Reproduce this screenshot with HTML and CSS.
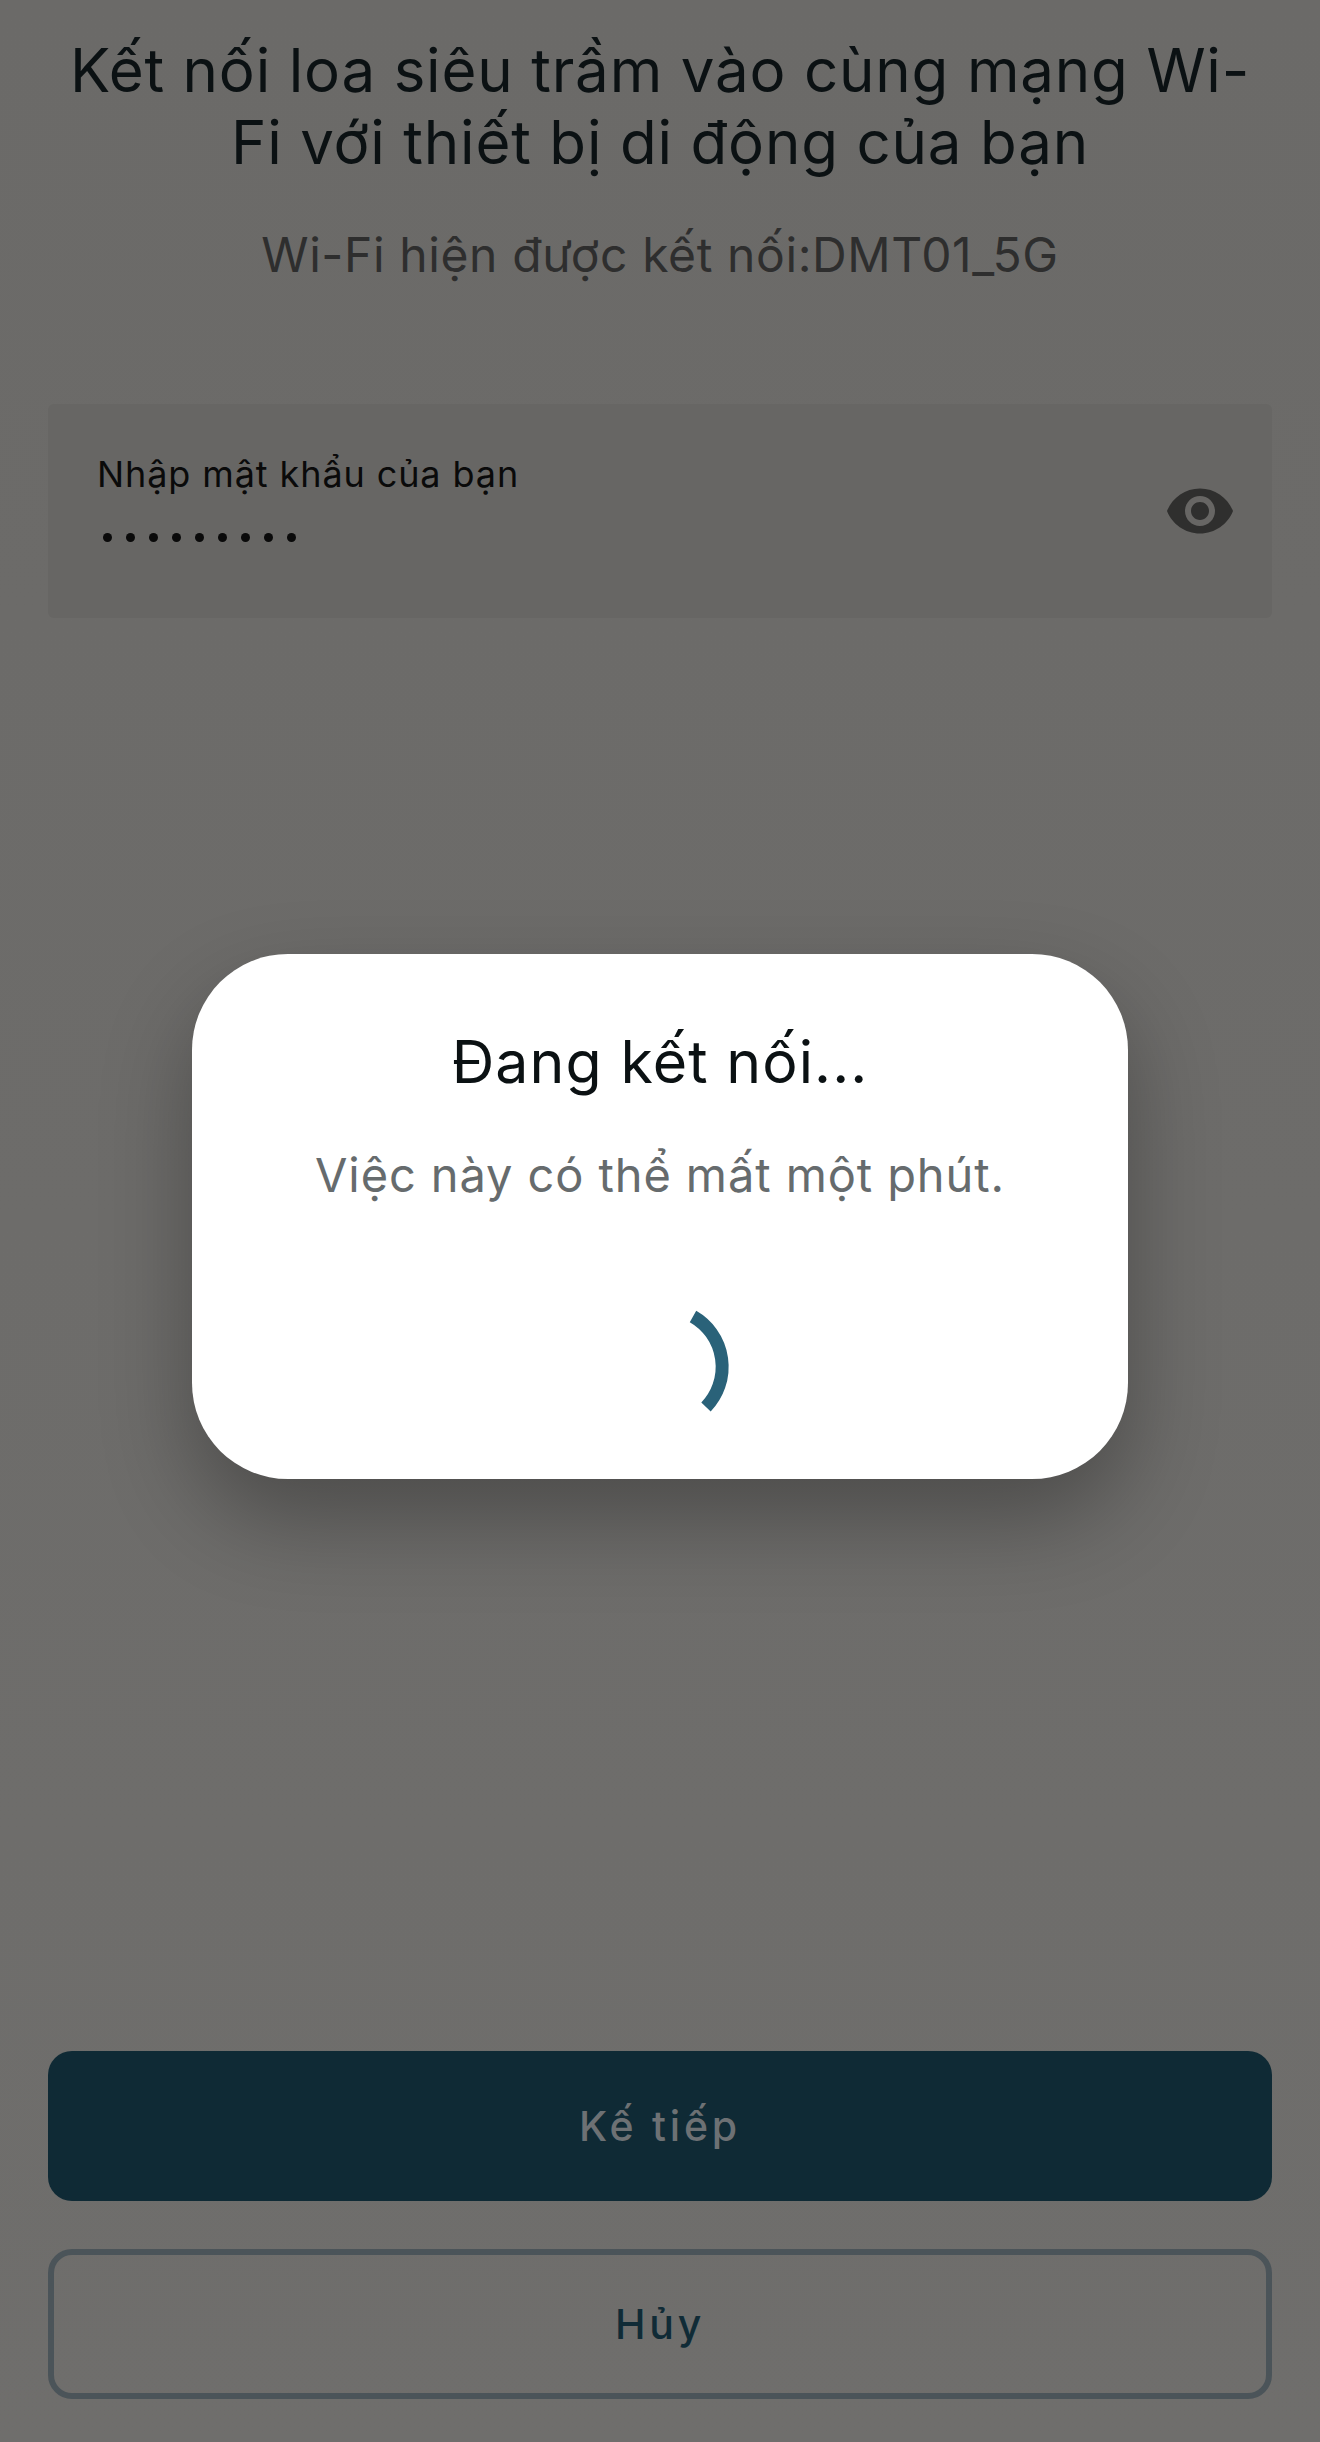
FILE: index.html
```html
<!DOCTYPE html>
<html lang="vi">
<head>
    <meta charset="UTF-8">
    <title>Kết nối Wi-Fi</title>
    <link rel="stylesheet" href="styles.css">
</head>
<body>
    <div id="main">
        <h1 class="title">Kết nối loa siêu trầm vào cùng mạng Wi-<br>Fi với thiết bị di động của bạn</h1>
        <p class="current-wifi">Wi-Fi hiện được kết nối:DMT01_5G</p>

        <div class="password-field">
            <div class="password-text">
                <label class="password-label">Nhập mật khẩu của bạn</label>
                <div class="password-dots">
                    <span></span><span></span><span></span><span></span><span></span><span></span><span></span><span></span><span></span>
                </div>
            </div>
            <svg class="eye" viewBox="0 0 24 24" width="72" height="72">
                <path d="M12 4.5C7 4.5 2.73 7.61 1 12c1.73 4.39 6 7.5 11 7.5s9.27-3.11 11-7.5c-1.73-4.39-6-7.5-11-7.5zM12 17c-2.76 0-5-2.24-5-5s2.24-5 5-5 5 2.24 5 5-2.24 5-5 5zm0-8c-1.66 0-3 1.34-3 3s1.34 3 3 3 3-1.34 3-3-1.34-3-3-3z"/>
            </svg>
        </div>

        <div class="buttons">
            <button class="btn btn-next">Kế tiếp</button>
            <button class="btn btn-cancel">Hủy</button>
        </div>
    </div>

    <div class="dialog">
        <h2 class="dialog-title">Đang kết nối...</h2>
        <p class="dialog-text">Việc này có thể mất một phút.</p>
        <svg class="spinner" viewBox="0 0 132 132" width="132" height="132">
            <path d="M93 16.5A58 58 0 0 1 106 107"/>
        </svg>
    </div>
</body>
</html>
```

FILE: styles.css
```css
* {
    box-sizing: border-box;
}

html, body {
    margin: 0;
    padding: 0;
}

body {
    font-family: 'Inter', 'Liberation Sans', sans-serif;
    background: linear-gradient(#6b6a68, #6f6e6c);
    width: 1320px;
    height: 2442px;
    overflow: hidden;
    position: relative;
}

#main {
    height: 2442px;
    padding: 34px 48px 43px;
    display: flex;
    flex-direction: column;
}

.title {
    margin: 0;
    font-size: 60px;
    line-height: 72px;
    font-weight: 400;
    letter-spacing: 0.82px;
    text-align: center;
    color: #0b1113;
}

.current-wifi {
    margin: 47px 0 0;
    font-size: 48px;
    line-height: 60px;
    letter-spacing: 0.6px;
    text-align: center;
    color: #2e2e2e;
}

.password-field {
    margin-top: 119px;
    height: 214px;
    padding: 0 36px 0 49px;
    background-color: #676664;
    border-radius: 6px;
    display: flex;
    align-items: center;
    justify-content: space-between;
}

.password-text {
    margin-bottom: 28px;
}

.password-label {
    display: block;
    font-size: 36px;
    line-height: 44px;
    letter-spacing: 0.9px;
    color: #0a0a0a;
}

.password-dots {
    display: flex;
    gap: 14px;
    margin: 37px 0 0 6px;
}

.password-dots span {
    width: 9px;
    height: 9px;
    border-radius: 50%;
    background-color: #0a0a0a;
}

.eye {
    fill: #2f2f2e;
}

.buttons {
    margin-top: auto;
    display: flex;
    flex-direction: column;
    gap: 48px;
}

.btn {
    height: 150px;
    width: 100%;
    border-radius: 24px;
    font-family: inherit;
    font-size: 41px;
    letter-spacing: 3.8px;
    font-weight: 500;
}

.btn-next {
    background-color: #0f2a35;
    border: none;
    color: #6d7174;
}

.btn-cancel {
    background: none;
    border: 6px solid #4b5459;
    color: #102b36;
}

.dialog {
    position: absolute;
    left: 192px;
    top: 954px;
    width: 936px;
    height: 525px;
    padding-top: 72px;
    background-color: #fff;
    border-radius: 96px;
    box-shadow: 0 40px 90px rgba(0, 0, 0, 0.3);
    text-align: center;
}

.dialog-title {
    margin: 0;
    font-size: 59px;
    line-height: 72px;
    font-weight: 400;
    letter-spacing: 1.1px;
    color: #0b1113;
}

.dialog-text {
    margin: 47px 0 0;
    font-size: 47px;
    line-height: 60px;
    letter-spacing: 0.9px;
    color: #666b6d;
}

.spinner {
    position: absolute;
    left: 408px;
    top: 346px;
    fill: none;
    stroke: #2a6279;
    stroke-width: 13;
}
```
